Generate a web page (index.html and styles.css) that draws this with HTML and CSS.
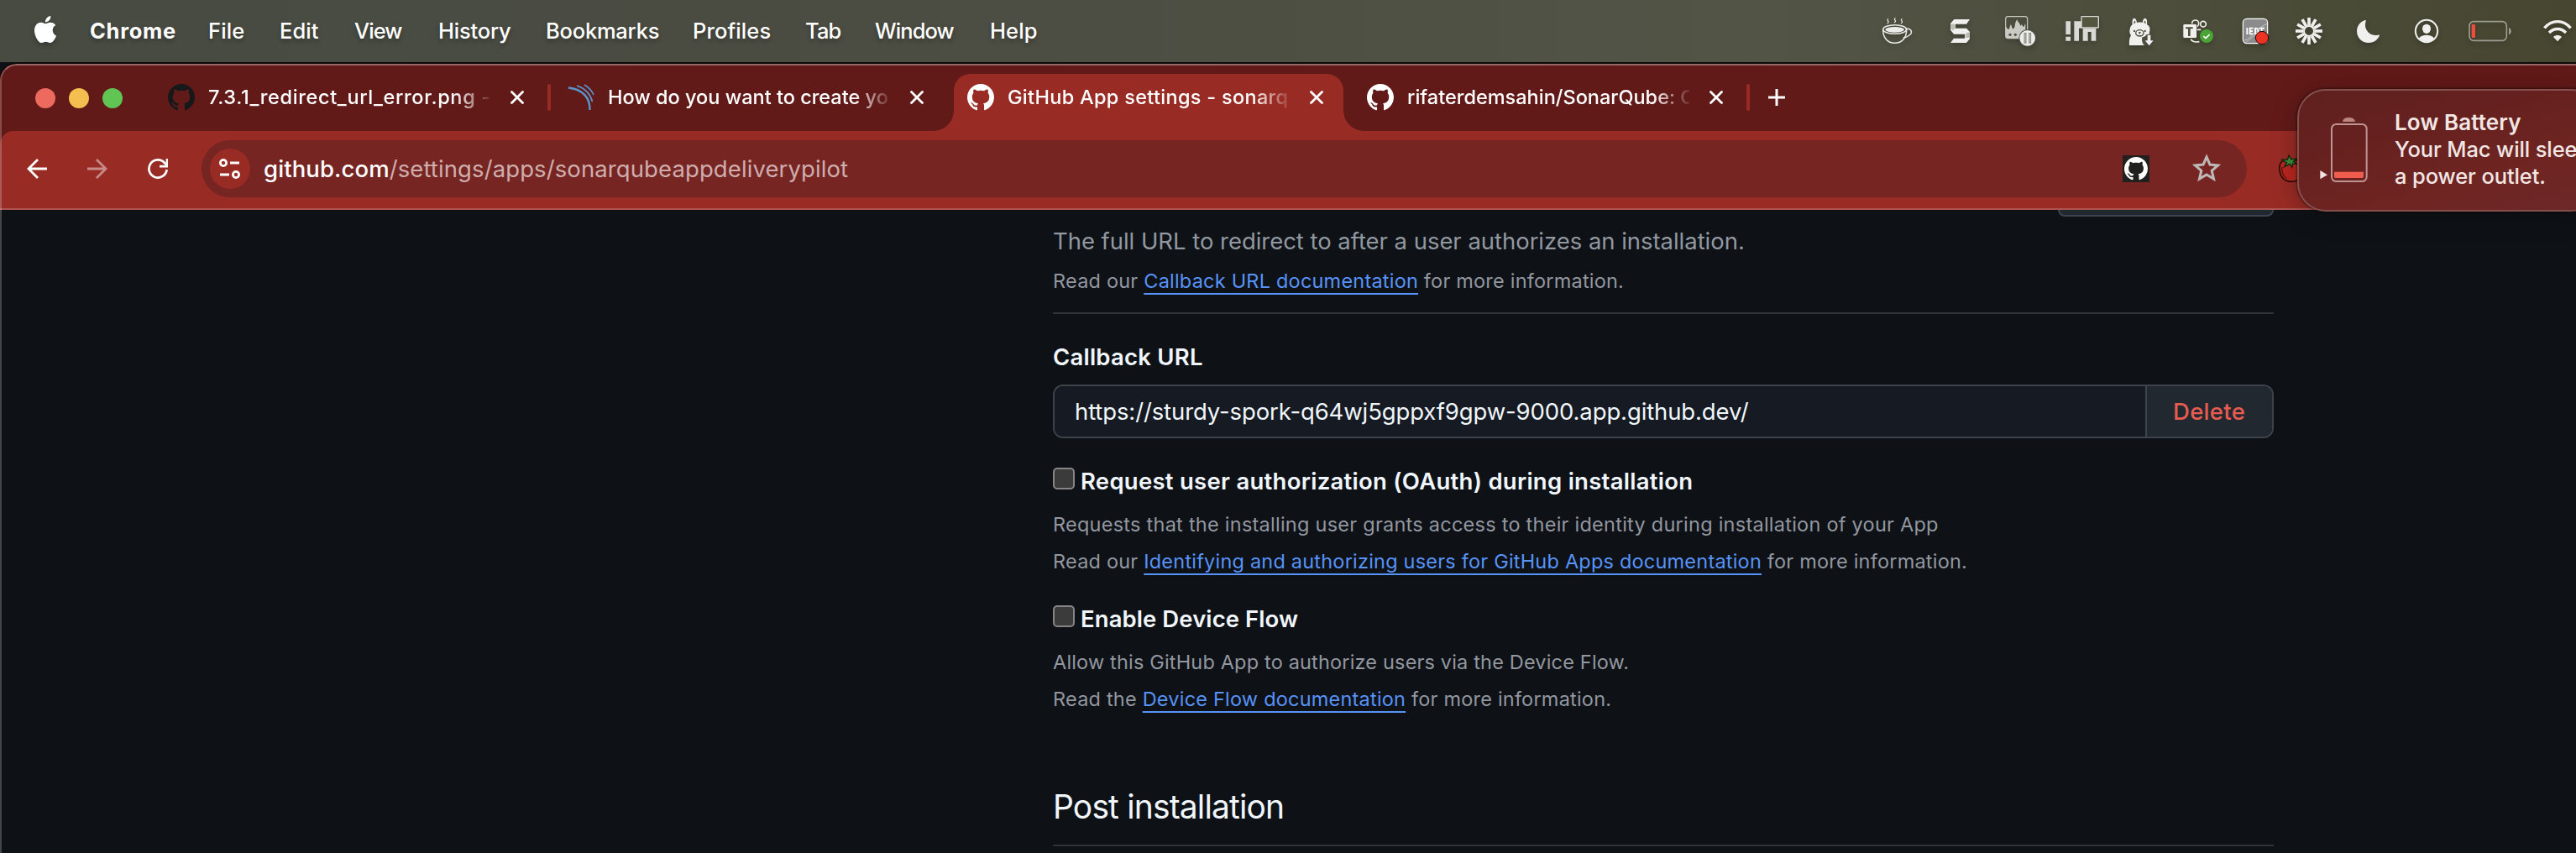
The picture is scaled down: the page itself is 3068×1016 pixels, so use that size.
FILE: index.html
```html
<!DOCTYPE html>
<html lang="en">
<head>
<meta charset="utf-8">
<title>GitHub App settings</title>
<link rel="stylesheet" href="styles.css">
</head>
<body>
<svg class="defs" aria-hidden="true">
  <symbol id="octocat" viewBox="0 0 16 16"><path d="M8 0C3.58 0 0 3.58 0 8c0 3.54 2.29 6.53 5.47 7.59.4.07.55-.17.55-.38 0-.19-.01-.82-.01-1.49-2.01.37-2.53-.49-2.69-.94-.09-.23-.48-.94-.82-1.13-.28-.15-.68-.52-.01-.53.63-.01 1.08.58 1.23.82.72 1.21 1.87.87 2.33.66.07-.52.28-.87.51-1.07-1.78-.2-3.64-.89-3.64-3.95 0-.87.31-1.59.82-2.15-.08-.2-.36-1.02.08-2.12 0 0 .67-.21 2.2.82.64-.18 1.32-.27 2-.27s1.36.09 2 .27c1.53-1.04 2.2-.82 2.2-.82.44 1.1.16 1.92.08 2.12.51.56.82 1.27.82 2.15 0 3.07-1.87 3.75-3.65 3.95.29.25.54.73.54 1.48 0 1.07-.01 1.93-.01 2.2 0 .21.15.46.55.38A8.01 8.01 0 0 0 16 8c0-4.42-3.58-8-8-8z"/></symbol>
  <symbol id="close" viewBox="0 0 16 16"><path d="M1.5 1.5l13 13M14.5 1.5l-13 13" fill="none" stroke="#fff" stroke-width="2.8" stroke-linecap="round"/></symbol>
</svg>

<header class="menubar">
  <svg class="apple" viewBox="0 0 24 24"><path d="M12.152 6.896c-.948 0-2.415-1.078-3.96-1.04-2.04.027-3.91 1.183-4.961 3.014-2.117 3.675-.546 9.103 1.519 12.09 1.013 1.454 2.208 3.09 3.792 3.039 1.52-.065 2.09-.987 3.935-.987 1.831 0 2.35.987 3.96.948 1.637-.026 2.676-1.48 3.676-2.948 1.156-1.688 1.636-3.325 1.662-3.415-.039-.013-3.182-1.221-3.22-4.857-.026-3.04 2.48-4.494 2.597-4.559-1.429-2.09-3.623-2.324-4.39-2.376-2-.156-3.675 1.09-4.61 1.09zM15.53 3.83c.843-1.012 1.4-2.427 1.245-3.83-1.207.052-2.662.805-3.532 1.818-.78.896-1.454 2.338-1.273 3.714 1.338.104 2.715-.688 3.559-1.701"/></svg>
  <nav class="menus">
    <b>Chrome</b><span>File</span><span>Edit</span><span class="tight">View</span><span class="snug">History</span><span class="snug">Bookmarks</span><span>Profiles</span><span class="tight">Tab</span><span class="tight">Window</span><span>Help</span>
  </nav>
  <div class="status">
    <!-- coffee cup -->
    <svg width="80" height="74" viewBox="60 0 240 222"><g fill="none" stroke="#ececea" stroke-width="4.5" stroke-linecap="round"><path d="M68 106c0 30 16 48 42 48s42-18 42-48"/><ellipse cx="110" cy="105" rx="42" ry="16"/><path d="M150 104c18-6 26 12 12 22-7 5-13 8-20 9"/><path d="M86 68q-4 3 0 7t-2 8M111 65q-4 3 0 7t-2 8M135 68q-4 3 0 7t-2 8" stroke-width="3.5"/></g><ellipse cx="110" cy="106" rx="34" ry="10" fill="#ececea"/></svg>
    <!-- ribbon S -->
    <svg width="65" height="74" viewBox="300 0 195 222"><path fill="#f0f0ee" d="M322 69h56l-12 17h-39v15h39l12 13v25l-12 14h-57l12-16h39v-15h-39l-12-15V84z"/><path fill="#bdbdb6" d="M309 86h17v15l-8 8-9-6zM362 122l10-8 6 4v17h-16z"/></svg>
    <!-- activity with pause badge -->
    <svg width="70" height="74" viewBox="495 0 210 222"><rect x="506" y="59" width="78" height="78" rx="9" fill="none" stroke="#c9cac4" stroke-width="3.5"/><path fill="#c9cac4" d="M507 94c3 8 7 11 10 10 4-2 3-8 7-17 6 8 5 17 9 16 9-3 3-19 14-34 1 9 9 13 11 20 2 4 5 4 4-3 6 5 6 12 9 10 3-4 4-13 6-10v42c0 5-3 9-8 9h-54c-5 0-8-4-8-9z"/><circle cx="522" cy="124" r="5" fill="#4e5040"/><circle cx="541" cy="124" r="5" fill="#4e5040"/><circle cx="584" cy="136" r="31" fill="#4e5040"/><circle cx="584" cy="136" r="28" fill="#ececea"/><path d="M576 117v38M593 117v38" stroke="#8b8c80" stroke-width="9"/><path d="M576 120v32M593 120v32" stroke="#b9bab0" stroke-width="3"/></svg>
    <!-- bars with screen -->
    <svg width="75" height="74" viewBox="705 0 225 222"><g fill="#d9dad5"><path d="M721 76h17v47h-17zM721 131h17v15h-17zM751 76h26v25h-9v45h-17zM782 102h47v44h-17v-32h-12v32h-18z"/></g><rect x="777" y="59" width="61" height="40" rx="2" fill="#54563f" stroke="#d9dad5" stroke-width="4"/></svg>
    <!-- llama with download arrow -->
    <svg width="65" height="74" viewBox="930 0 195 222"><path fill="#f0f0ee" d="M959 88c-2-14 1-23 7-23 5 0 8 7 9 16 6-2 14-2 20 0 1-9 4-16 9-16 6 0 9 9 7 23 9 4 12 12 10 22-2 7-2 10 1 15l-12 6v24c-8 7-12 7-17 7h-45c-1-14 0-27 6-35-5-8-6-15-4-22 1-8 4-14 9-17z"/><path fill="#4d4e3d" d="M963 84l4-11 4 8zM1000 81l4-8 4 11zM999 160c-6-9-7-18-5-27 6 0 12-4 15-9l16-4v40z"/><ellipse cx="985" cy="118" rx="14" ry="11" fill="none" stroke="#4d4e3d" stroke-width="4"/><circle cx="966" cy="111" r="3.5" fill="#4d4e3d"/><circle cx="1004" cy="111" r="3.5" fill="#4d4e3d"/><path d="M981 116h8M985 117v5" stroke="#4d4e3d" stroke-width="3.5"/><path fill="#f0f0ee" d="M1013 125h11v20h10l-15 18-15-18h9z"/></svg>
    <!-- teams with presence badge -->
    <svg width="70" height="74" viewBox="1125 0 210 222"><g fill="none" stroke="#f0f0ee" stroke-width="5"><circle cx="1184" cy="84" r="12"/><circle cx="1212" cy="86" r="10"/><path d="M1188 106h16M1168 140c4 9 12 12 30 9"/></g><rect x="1138" y="85" width="52" height="52" rx="6" fill="#4d4e3d"/><rect x="1141" y="87" width="47" height="48" rx="4" fill="#f0f0ee"/><path d="M1149 97h26v6h-9v26h-8v-26h-9z" fill="#4d4e3d"/><circle cx="1224" cy="129" r="24" fill="#4ca335"/><path d="M1213 129l8 8 14-14" fill="none" stroke="#fff" stroke-width="5"/></svg>
    <!-- recorder with red dot -->
    <svg width="65" height="74" viewBox="75 0 195 222"><rect x="94" y="67" width="88" height="88" rx="14" fill="#8b8b8b" stroke="#fff" stroke-width="3.5"/><path d="M98 145c30-8 48-48 82-60M104 151c14-10 34-24 48-40" stroke="#c5c5c5" stroke-width="3" fill="none"/><path d="M109 99v24M119 99v24M117 101h14M117 111h12M117 121h14M138 99v24M138 101c14-1 14 20 0 20M151 101h20M161 99v16" stroke="#fff" stroke-width="5.5" fill="none"/><circle cx="162" cy="135" r="23" fill="#ea3323" stroke="#1b0907" stroke-width="3"/></svg>
    <!-- burst -->
    <svg width="70" height="74" viewBox="270 0 210 222"><circle cx="330" cy="111" r="18" fill="none" stroke="#f0f0ee" stroke-width="6"/><g stroke="#f0f0ee" stroke-width="11"><path id="ray" d="M330 91V63"/><use href="#ray" transform="rotate(30 330 111)"/><use href="#ray" transform="rotate(60 330 111)"/><use href="#ray" transform="rotate(90 330 111)"/><use href="#ray" transform="rotate(120 330 111)"/><use href="#ray" transform="rotate(150 330 111)"/><use href="#ray" transform="rotate(180 330 111)"/><use href="#ray" transform="rotate(210 330 111)"/><use href="#ray" transform="rotate(240 330 111)"/><use href="#ray" transform="rotate(270 330 111)"/><use href="#ray" transform="rotate(300 330 111)"/><use href="#ray" transform="rotate(330 330 111)"/></g></svg>
    <!-- focus moon -->
    <svg width="70" height="74" viewBox="480 0 210 222"><path fill="#f0f0ee" d="M530 72c3-1 4 1 3 4-9 27 12 56 44 49 4-1 6 0 4 4-7 15-21 24-38 24-24 0-42-18-42-42 0-17 11-33 29-39z"/></svg>
    <!-- user -->
    <svg width="65" height="74" viewBox="690 0 195 222"><circle cx="750" cy="111" r="39.5" fill="none" stroke="#f0f0ee" stroke-width="6"/><ellipse cx="750" cy="103" rx="15" ry="17" fill="#f0f0ee"/><path fill="#f0f0ee" d="M723 137c5-9 16-12 27-12s22 3 27 12c-6 7-16 11-27 11s-21-4-27-11z"/></svg>
    <!-- battery -->
    <svg width="90" height="74" viewBox="885 0 270 222"><rect x="903" y="77" width="133" height="68" rx="15" fill="none" stroke="#9c9c91" stroke-width="5"/><path d="M1044 98c11 4 11 22 0 26z" fill="#9c9c91"/><rect x="911" y="87" width="13" height="48" rx="4" fill="#ec4d3d"/></svg>
    <!-- wifi -->
    <svg width="43" height="74" viewBox="1155 0 129 222"><g fill="none" stroke="#f0f0ee" stroke-width="10"><path d="M1171 100c27-31 67-31 94 0"/><path d="M1188 117c17-18 43-18 60 0"/></g><path fill="#f0f0ee" d="M1203 132c9-8 21-8 30 0l-15 16z"/></svg>
  </div>
</header>

<div class="window">
  <div class="tabstrip">
    <div class="lights"><i class="red"></i><i class="yellow"></i><i class="green"></i></div>
    <div class="tab first">
      <svg class="favicon dark"><use href="#octocat"/></svg>
      <span class="title t1">7.3.1_redirect_url_error.png - </span>
      <svg class="x"><use href="#close"/></svg>
    </div>
    <i class="sep"></i>
    <div class="tab second">
      <svg class="favicon" viewBox="0 0 32 32"><g fill="none" stroke="#5a97cf"><path d="M1 4.500C17 6 27 16 26.500 31" stroke-width="2.400"/><path d="M11 2C20 5 27 12 29.500 21" stroke-width="1.800"/><path d="M20 1c5 3 9 7 11 12" stroke-width="1.500"/></g></svg>
      <span class="title">How do you want to create yo</span>
      <svg class="x"><use href="#close"/></svg>
    </div>
    <div class="tab active">
      <svg class="favicon"><use href="#octocat"/></svg>
      <span class="title t3">GitHub App settings - sonarqu</span>
      <svg class="x"><use href="#close"/></svg>
    </div>
    <div class="tab last">
      <svg class="favicon"><use href="#octocat"/></svg>
      <span class="title">rifaterdemsahin/SonarQube: C</span>
      <svg class="x"><use href="#close"/></svg>
    </div>
    <i class="sep"></i>
    <svg class="plus" viewBox="0 0 20 20"><path d="M10 0v20M0 10h20" stroke="#fff" stroke-width="3"/></svg>
  </div>

  <div class="toolbar">
    <svg class="nav" viewBox="0 0 24 24"><path d="M24 12H2M13 1L2 12l11 11" fill="none" stroke="#fff" stroke-width="2.800"/></svg>
    <svg class="nav faded" viewBox="0 0 24 24"><path d="M0 12h22M11 1l11 11-11 11" fill="none" stroke="#fff" stroke-width="2.800"/></svg>
    <svg class="nav" viewBox="0 0 24 24"><path d="M22.600 13A10.600 10.600 0 1 1 20 5l3 3" fill="none" stroke="#fff" stroke-width="2.700"/><path d="M23 0v9.200h-9" fill="none" stroke="#fff" stroke-width="2.700"/></svg>
    <div class="omnibox">
      <span class="site"><svg width="26" height="24" viewBox="0 0 26 24"><g fill="none" stroke="#fff" stroke-width="2.800"><circle cx="5" cy="5" r="3.600"/><circle cx="20" cy="19" r="3.600"/><path d="M13 5h11M1 19h11"/></g></svg></span>
      <span class="url"><b>github.com</b>/settings/apps/sonarqubeappdeliverypilot</span>
      <span class="badge"><svg viewBox="0 0 16 16"><use href="#octocat"/></svg></span>
      <svg class="star" viewBox="0 0 30 30"><path d="M15 3.500l3.500 8 8.500.800-6.500 5.700 2 8.500-7.500-4.500-7.500 4.500 2-8.500L3 12.300l8.500-.8z" fill="none" stroke="#bdb7b6" stroke-width="2.700"/></svg>
    </div>
    <svg class="tomato" viewBox="220 555 96 102"><path d="M240 576c-14 4-19 18-17 34 2 24 17 42 42 42 28 0 44-18 44-44 0-22-10-32-27-33z" fill="#b9271f" stroke="#2b0c08" stroke-width="5"/><path d="M232 600c-2 18 4 32 16 40" stroke="#2b0c08" stroke-width="3" fill="none"/><path d="M229 573l22 1 5-16 8 14 22-2-13 10 14 10-17-3-2 14-9-12-19 10 8-15z" fill="#3f8a3a" stroke="#12260f" stroke-width="4"/></svg>
  </div>

  <main class="page">
    <div class="cutoff"></div>
    <p class="lead">The full URL to redirect to after a user authorizes an installation.</p>
    <p class="note">Read our <a>Callback URL documentation</a> for more information.</p>
    <hr>
    <h2 class="label">Callback URL</h2>
    <div class="field"><span class="value">https://sturdy-spork-q64wj5gppxf9gpw-9000.app.github.dev/</span><span class="delete">Delete</span></div>
    <div class="check"><i class="box"></i><span class="oauth">Request user authorization (OAuth) during installation</span></div>
    <p class="note after-check wide">Requests that the installing user grants access to their identity during installation of your App</p>
    <p class="note">Read our <a>Identifying and authorizing users for GitHub Apps documentation</a> for more information.</p>
    <div class="check"><i class="box"></i><span>Enable Device Flow</span></div>
    <p class="note after-check">Allow this GitHub App to authorize users via the Device Flow.</p>
    <p class="note">Read the <a>Device Flow documentation</a> for more information.</p>
    <h1 class="heading">Post installation</h1>
    <hr>
  </main>
</div>

<aside class="notification">
  <svg class="lowbatt" width="60" height="84" viewBox="366 414 180 252"><path d="M450 435c2-11 10-15 22-15s21 4 23 15z" fill="#b98683"/><rect x="411" y="444" width="125" height="204" rx="16" fill="none" stroke="#bf9492" stroke-width="6"/><path d="M420 614h105v15c0 5-2 7-7 7h-91c-5 0-7-2-7-7z" fill="#ef5b4c"/><path d="M370 609l26 15.500-26 15.500z" fill="#f1e2e1"/></svg>
  <div class="message"><b>Low Battery</b><span>Your Mac will slee</span><span>a power outlet.</span></div>
</aside>
</body>
</html>
```
FILE: styles.css
```css
* { box-sizing: border-box; margin: 0; padding: 0; }

body {
  position: relative;
  width: 3068px;
  height: 1016px;
  overflow: hidden;
  background: #0e1116;
  font-family: Inter, "Liberation Sans", sans-serif;
}

svg { display: block; flex: none; }
.defs { display: none; }

/* Menu bar */
.menubar {
  display: flex;
  align-items: center;
  height: 74px;
  padding-left: 38px;
  background: linear-gradient(90deg, #474b42 0%, #4b4c42 35%, #525446 68%, #4c4d3a 85%, #464631 100%);
  color: #fff;
}
.apple {
  width: 32px;
  height: 32px;
  margin-top: -4px;
  fill: #fff;
  filter: drop-shadow(0 3px 3px rgba(0, 0, 0, .25));
}
.menus {
  display: grid;
  grid-template-columns: 141px 85px 89px 100px 128px 175px 134px 83px 137px 82px;
  width: 1154px;
  margin-left: 37px;
  font-size: 25.5px;
  font-weight: 500;
  line-height: 74px;
  letter-spacing: .1px;
  white-space: nowrap;
  text-shadow: 0 3px 5px rgba(0, 0, 0, .3);
}
.menus b { font-weight: 700; letter-spacing: .72px; }
.menus .tight { letter-spacing: -.9px; }
.menus .snug { letter-spacing: -.22px; }
.status {
  display: flex;
  margin-left: auto;
  filter: drop-shadow(0 3px 3px rgba(0, 0, 0, .22));
}

/* Browser window */
.window {
  position: relative;
  height: 940px;
  margin-top: 2px;
  overflow: hidden;
  border-radius: 20px 0 0 0;
  background: linear-gradient(#621a18 100px, #0e1116 100px);
  box-shadow: 0 0 0 2px #0b0a08;
}
.window::after {
  content: "";
  position: absolute;
  inset: 0;
  border: solid rgba(255, 255, 255, .22);
  border-width: 2px 0 0 2px;
  border-top-color: rgba(255, 255, 255, .34);
  border-radius: 20px 0 0 0;
  pointer-events: none;
}
.tabstrip {
  display: flex;
  align-items: flex-start;
  height: 80px;
  padding: 12px 0 0 42px;
  background: #621a18;
}
.lights { display: flex; gap: 16px; width: 134px; padding-top: 17px; }
.lights i { width: 24px; height: 24px; border-radius: 50%; }
.red { background: #ed6a5e; }
.yellow { background: #f5bf4f; }
.green { background: #61c554; }

.tab {
  position: relative;
  display: flex;
  align-items: center;
  height: 68px;
  padding-bottom: 12px;
}
.first { width: 476px; padding-left: 24px; }
.second { width: 480px; padding-left: 20px; }
.active { width: 464px; padding-left: 16px; background: #992b25; border-radius: 20px 20px 0 0; }
.last { width: 480px; padding-left: 28px; }
.active::before,
.active::after {
  content: "";
  position: absolute;
  bottom: 0;
  width: 24px;
  height: 24px;
}
.active::before { left: -24px; background: radial-gradient(circle at 0 0, transparent 23.5px, #992b25 24px); }
.active::after { right: -24px; background: radial-gradient(circle at 100% 0, transparent 23.5px, #992b25 24px); }
.favicon { width: 32px; height: 32px; fill: #fff; }
.favicon.dark { fill: #17181a; }
.title {
  width: 336px;
  margin: 0 24px 0 16px;
  overflow: hidden;
  color: #fff;
  font-size: 23.5px;
  font-weight: 500;
  line-height: 56px;
  white-space: nowrap;
  -webkit-mask-image: linear-gradient(90deg, #000 292px, transparent 340px);
  mask-image: linear-gradient(90deg, #000 292px, transparent 340px);
}
.t1 { letter-spacing: .65px; }
.t3 { letter-spacing: .3px; }
.x { width: 16px; height: 16px; }
.sep { width: 4px; height: 32px; margin-top: 12px; border-radius: 2px; background: #992b25; }
.plus { width: 20px; height: 20px; margin: 18px 0 0 22px; }

.toolbar {
  display: flex;
  align-items: center;
  height: 94px;
  padding: 0 0 2px 32px;
  border-bottom: 2px solid #b05450;
  border-top-left-radius: 16px;
  background: #992b25;
}
.nav { width: 24px; height: 24px; margin-right: 48px; }
.faded { opacity: .45; }
.omnibox {
  display: flex;
  align-items: center;
  width: 2436px;
  height: 68px;
  margin-left: -8px;
  padding-left: 10px;
  border-radius: 34px;
  background: #762523;
}
.site {
  display: flex;
  align-items: center;
  justify-content: center;
  width: 48px;
  height: 48px;
  border-radius: 50%;
  background: #992b25;
}
.url {
  margin-left: 16px;
  padding-top: 1px;
  color: #cfadac;
  font-size: 27.5px;
  line-height: 67px;
  letter-spacing: .1px;
}
.url b { color: #fff; font-weight: 500; }
.badge {
  width: 32px;
  height: 32px;
  margin-left: auto;
  padding: 2px;
  background: #22201f;
}
.badge svg { width: 28px; height: 28px; fill: #fff; }
.star { width: 34px; height: 34px; margin: -2px 31px 0 51px; }
.tomato { width: 32px; height: 34px; margin-left: 38px; }

/* Settings page */
.page { height: 766px; padding-left: 1254px; background: #0e1116; color: #f0f6fc; }
.page > * { width: 1454px; }
.page > .cutoff {
  width: 257px;
  height: 8px;
  margin: 0 0 8px 1197px;
  border: 2px solid #3d444d;
  border-top: 0;
  border-radius: 0 0 12px 12px;
  background: #212830;
}
.lead { color: #9198a0; font-size: 27.5px; line-height: 42px; white-space: nowrap; letter-spacing: -.04px; }
.note {
  margin-top: 9px;
  color: #9297a0;
  font-size: 23.5px;
  line-height: 35px;
  letter-spacing: .21px;
  white-space: nowrap;
}
.note.wide { letter-spacing: .25px; }
.note a {
  color: #5793f8;
  text-decoration: underline 2px;
  text-underline-offset: 6px;
  text-decoration-skip-ink: none;
}
hr { height: 2px; margin-top: 20px; border: 0; background: #303439; }
.label { margin-top: 30px; font-size: 27.5px; font-weight: 600; line-height: 42px; letter-spacing: .23px; }
.field {
  display: flex;
  height: 64px;
  margin: 12px 0 30px;
  overflow: hidden;
  border: 2px solid #3d434b;
  border-radius: 12px;
  font-size: 27.5px;
  line-height: 61px;
}
.value { width: 1299px; padding-left: 24px; background: #161a22; letter-spacing: -.12px; }
.delete {
  flex: 1;
  padding-left: 31px;
  border-left: 2px solid #3d434b;
  background: #22282f;
  color: #e65c50;
  font-weight: 500;
  letter-spacing: .3px;
}
.check {
  display: flex;
  gap: 7px;
  height: 42px;
  margin-top: 30px;
  font-size: 27.5px;
  font-weight: 600;
  line-height: 42px;
  letter-spacing: .08px;
}
.oauth { letter-spacing: .27px; }
.box {
  width: 26px;
  height: 26px;
  margin-top: 5px;
  border: 2px solid #858585;
  border-radius: 5px;
  background: #3b3b3b;
}
.note.after-check { margin-top: 13px; }
.note.after-check:not(.wide) { letter-spacing: .17px; }
.heading { margin-top: 86px; font-size: 39px; font-weight: 400; line-height: 50px; letter-spacing: -.85px; }

/* System notification */
.notification {
  position: absolute;
  left: 2736px;
  top: 106px;
  display: flex;
  width: 360px;
  height: 146px;
  border: 2px solid #85504d;
  border-radius: 34px;
  background: linear-gradient(165deg, #5f211e 0%, #66211f 35%, #6f2522 70%, #6c2828 100%);
  box-shadow: 0 0 2px 1px rgba(20, 5, 5, .55), 0 4px 30px rgba(0, 0, 0, .3);
}
.lowbatt { margin: 30px 0 0 24px; }
.message {
  display: flex;
  flex-direction: column;
  margin: 22px 0 0 30px;
  color: #f2e6e5;
  font-size: 25.5px;
  font-weight: 500;
  line-height: 32px;
  white-space: nowrap;
}
.message b { font-size: 26px; font-weight: 600; letter-spacing: .12px; }
.message span { letter-spacing: -.12px; }
```
